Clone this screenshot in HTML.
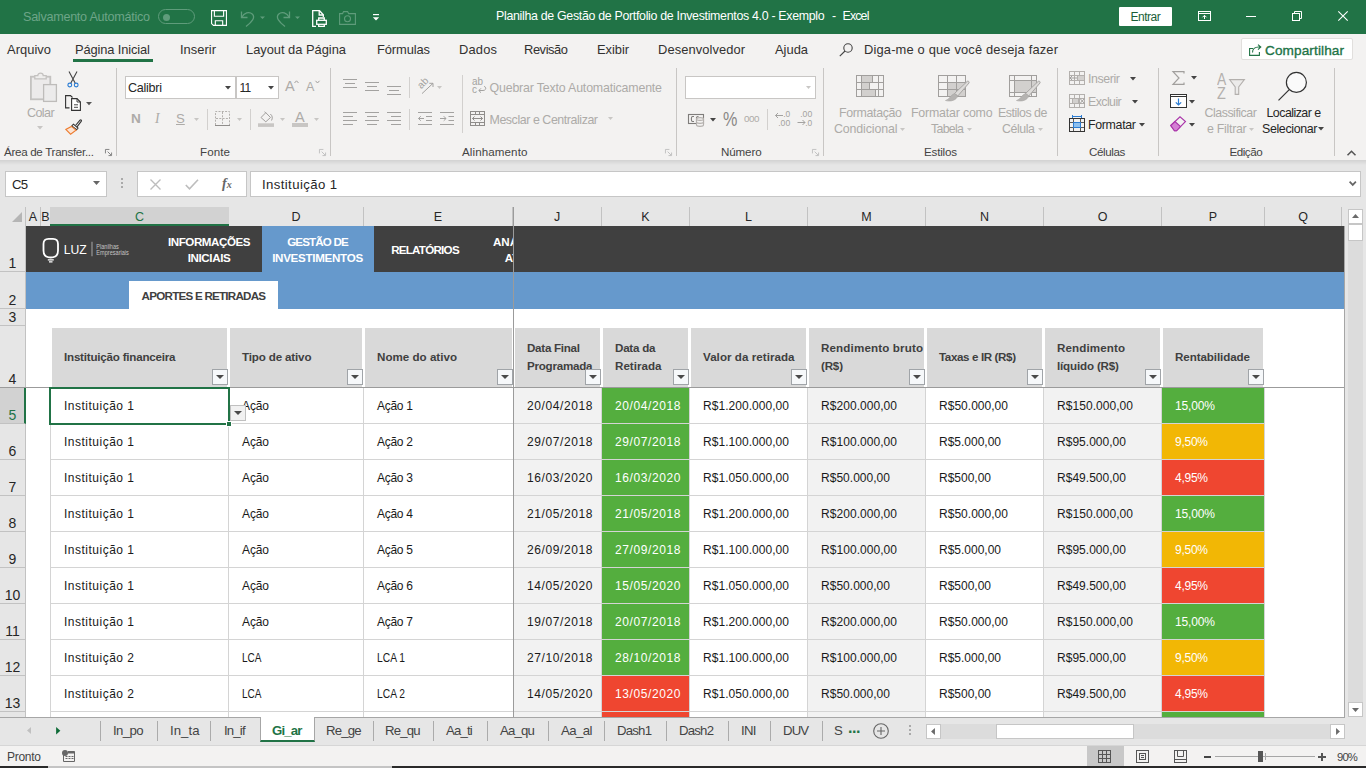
<!DOCTYPE html>
<html lang="pt-BR"><head><meta charset="utf-8"><title>Planilha de Gestão de Portfolio de Investimentos 4.0 - Exemplo - Excel</title>
<style>
html,body{margin:0;padding:0}
body{width:1366px;height:768px;overflow:hidden;position:relative;background:#e6e6e6;font-family:"Liberation Sans",sans-serif;color:#262626}
.a,.t{position:absolute}
.t{white-space:nowrap;line-height:1;margin:0}
svg{position:absolute;overflow:visible}
/* title bar */
#tb{left:0;top:0;width:1366px;height:34px;background:#217346}
#tb .t{color:#fff;font-size:12.4px}
/* ribbon tabs */
#rt{left:0;top:34px;width:1366px;height:31px;background:#f3f2f1}
#rt .t{font-size:12.900px;top:10px;color:#323130}
/* ribbon */
#rb{left:0;top:65px;width:1366px;height:95px;background:#f3f2f1}
#rb .t{font-size:12px;color:#adaba8}
#rb .lbl{font-size:11.6px;color:#444;top:81px}
#rb .sep{position:absolute;top:3px;width:1px;height:88px;background:#c8c6c4}
#rb .dk{color:#262626}
.shadow{left:0;top:160px;width:1366px;height:5px;background:linear-gradient(#d2d2d2,#e6e6e6)}
/* formula bar */
.fb{background:#fff;border:1px solid #c6c6c6;box-sizing:border-box}
/* grid */
#grid{left:0;top:207px;width:1344px;height:510px;overflow:hidden;background:#fff}
.ch{position:absolute;top:0;height:19px;background:#e6e6e6;font-size:12.5px;color:#262626;text-align:center;line-height:20px;box-sizing:border-box;border-right:1px solid #c2c2c2}
.rh{position:absolute;left:0;width:26px;background:#e6e6e6;box-sizing:border-box;border-bottom:1px solid #c2c2c2;border-right:1px solid #c2c2c2;font-size:14px;color:#262626;text-align:center}
.rh span{position:absolute;left:0;width:25px;bottom:1px;text-align:center;line-height:1}
.hc{position:absolute;top:121px;height:59px;background:#d9d9d9;font-weight:bold;font-size:11.6px;color:#404040;box-sizing:border-box;padding-left:12px;display:flex;align-items:center;line-height:18px;white-space:nowrap;padding-bottom:1px}
.fbt{position:absolute;top:162px;width:16px;height:16px;background:#f6f8fa;border:1px solid #a0a4a8;box-sizing:border-box}
.fbt:after{content:"";position:absolute;left:3px;top:5px;border:4px solid transparent;border-top:4px solid #4a4a4a;border-bottom:0}
.row{position:absolute;left:0;height:36px;width:1344px}
.c{position:absolute;top:0;height:36px;box-sizing:border-box;border-right:1px solid #d4d4d4;border-bottom:1px solid #d4d4d4;font-size:12px;line-height:37.5px;padding-left:13px;white-space:nowrap;color:#1a1a1a;overflow:hidden}
.g{background:#f2f2f2}
.gr{background:#54ae3e;color:#fff}
.ye{background:#f2b705;color:#fff}
.re{background:#ef4630;color:#fff}
.nv{color:#fff;font-weight:bold;font-size:11.600px;text-align:center}
.sbb{background:#fff;border:1px solid #c6c6c6;box-sizing:border-box}
/* sheet tabs */
#st{left:0;top:717px;width:1366px;height:28px;background:#e6e6e6}
#st .t{font-size:13.2px;top:7px;color:#444}
#st .sp{position:absolute;top:4px;width:1px;height:20px;background:#ababab}
/* status */
#sb{left:0;top:745px;width:1366px;height:21px;background:#f3f2f1;border-top:1px solid #d6d6d6;box-sizing:border-box}
#sb .t{font-size:12px;color:#444}
</style></head><body>
<div id="tb" class="a">
<span class="t" style="left:23px;top:11px;color:#6da588;font-size:12.6px;letter-spacing:-0.266px">Salvamento Automático</span>
<div class="a" style="left:158px;top:9px;width:37px;height:15px;border:1px solid #5f9c7b;border-radius:9px;box-sizing:border-box"></div>
<div class="a" style="left:163px;top:13.5px;width:7px;height:7px;border-radius:50%;background:#5f9c7b"></div>
<svg style="left:211px;top:10px" width="16" height="16" viewBox="0 0 17 17" fill="none" stroke="#fff" stroke-width="1.2"><path d="M0.6 0.6H16.4V16.4H2.6L0.6 14.4Z"/><path d="M3.6 0.6V6.6H13.4V0.6"/><path d="M4.6 16.4V11.4H12.4V16.4"/></svg>
<svg style="left:240px;top:10px" width="30" height="17" viewBox="0 0 30 17" fill="none" stroke="#5f9c7b" stroke-width="1.3"><path d="M1.5 1.5V7.5H7.5"/><path d="M1.8 7.2C4 3 9 1 12.5 4.2C15.5 7.5 12 12 6 16.5"/><path d="M20 6.5H25L22.5 9Z" fill="#5f9c7b" stroke="none"/></svg>
<svg style="left:275px;top:10px" width="30" height="17" viewBox="0 0 30 17" fill="none" stroke="#5f9c7b" stroke-width="1.3"><path d="M14.5 1.5V7.5H8.5"/><path d="M14.2 7.2C12 3 7 1 3.5 4.2C0.5 7.5 4 12 10 16.5"/><path d="M20 6.5H25L22.5 9Z" fill="#5f9c7b" stroke="none"/></svg>
<svg style="left:312px;top:10px" width="15" height="17" viewBox="0 0 15 17" fill="none" stroke="#fff" stroke-width="1.3"><path d="M4 16.3H0.7V0.7H7.5L11.3 4.7V7"/><path d="M7.2 0.7V5H11.3"/><rect x="4.7" y="10.3" width="9.6" height="4" /><path d="M6.7 10.3V8H12.3V10.3M6.7 14.3V16.3H12.3V14.3"/></svg>
<svg style="left:339px;top:11px" width="17" height="14" viewBox="0 0 17 14" fill="none" stroke="#5f9c7b" stroke-width="1.1"><path d="M0.6 2.6H3.6L4.6 0.6H8.6L9.6 2.6H16.4V13.4H0.6Z"/><circle cx="8.5" cy="7.8" r="3"/></svg>
<svg style="left:372px;top:14px" width="8" height="8" viewBox="0 0 8 8"><path d="M1 0.6H7" stroke="#fff" stroke-width="1.2"/><path d="M0.8 3.2H7.2L4 6.6Z" fill="#fff"/></svg>
<span class="t" style="left:496px;top:10px;letter-spacing:-0.314px">Planilha de Gestão de Portfolio de Investimentos 4.0 - Exemplo</span>
<span class="t" style="left:832px;top:10px">-</span>
<span class="t" style="left:842.5px;top:10px;letter-spacing:-0.850px">Excel</span>
<div class="a" style="left:1119px;top:7px;width:53px;height:19px;background:#fff;border-radius:1px"></div>
<span class="t" style="left:1130.500px;top:11px;color:#1b5e38;font-size:12px;letter-spacing:-0.498px">Entrar</span>
<svg style="left:1198px;top:11px" width="13" height="10" viewBox="0 0 13 10" fill="none" stroke="#fff" stroke-width="1"><rect x="0.500" y="0.500" width="12" height="9"/><path d="M0.500 2.500H12.500"/><path d="M6.500 8V4.500M4.500 6.300L6.500 4.300L8.500 6.300"/></svg>
<div class="a" style="left:1246px;top:16px;width:10px;height:1px;background:#fff"></div>
<svg style="left:1292px;top:11px" width="10" height="10" viewBox="0 0 10 10" fill="none" stroke="#fff" stroke-width="1"><rect x="0.500" y="2.500" width="7" height="7"/><path d="M2.500 2.500V0.500H9.500V7.500H7.500"/></svg>
<svg style="left:1338px;top:11px" width="10" height="10" viewBox="0 0 10 10" fill="none" stroke="#fff" stroke-width="1.100"><path d="M0.300 0.300L9.700 9.700M9.700 0.300L0.300 9.700"/></svg>
</div>

<div id="rt" class="a">
<span class="t" style="left:7px;letter-spacing:0.047px">Arquivo</span>
<span class="t" style="left:75px;letter-spacing:-0.130px">Página Inicial</span>
<div class="a" style="left:73px;top:25px;width:80px;height:3px;background:#217346"></div>
<span class="t" style="left:180px;letter-spacing:0.029px">Inserir</span>
<span class="t" style="left:246px;letter-spacing:-0.023px">Layout da Página</span>
<span class="t" style="left:377px;letter-spacing:-0.105px">Fórmulas</span>
<span class="t" style="left:459px;letter-spacing:0.184px">Dados</span>
<span class="t" style="left:524px;letter-spacing:-0.430px">Revisão</span>
<span class="t" style="left:597px;letter-spacing:-0.047px">Exibir</span>
<span class="t" style="left:658px;letter-spacing:0.083px">Desenvolvedor</span>
<span class="t" style="left:775px;letter-spacing:0.004px">Ajuda</span>
<svg style="left:838.500px;top:8.500px" width="14" height="14" viewBox="0 0 14 14" fill="none" stroke="#444" stroke-width="1.100"><circle cx="9" cy="5" r="4.200"/><path d="M6 8L0.800 13.200"/></svg>
<span class="t" style="left:864px;letter-spacing:0.161px">Diga-me o que você deseja fazer</span>
<div class="a" style="left:1241px;top:4px;width:112px;height:22px;background:#fff;border:1px solid #e1dfdd;box-sizing:border-box;border-radius:2px"></div>
<svg style="left:1249px;top:10px" width="13" height="12" viewBox="0 0 13 12" fill="none" stroke="#217346" stroke-width="1.1"><path d="M4 4.5H0.6V11.4H10.4V8"/><path d="M3.5 8.5C3.5 5 6 3 9.5 3H11.5M9 0.6L11.8 3L9 5.6"/></svg>
<span class="t" style="left:1265px;color:#217346;font-size:13.600px;-webkit-text-stroke:0.350px #217346;letter-spacing:0.108px">Compartilhar</span>
</div>

<div id="rb" class="a">
<!-- clipboard -->
<svg style="left:30px;top:7px" width="27" height="30" viewBox="0 0 27 30" fill="none" stroke="#c4c2c0" stroke-width="1.300"><rect x="0.900" y="4.700" width="19.400" height="22.600" fill="#eceaea" stroke-width="1.800"/><path d="M4.800 6.800V3.600H7.800C7.800 0.300 13.200 0.300 13.200 3.600H16.200V6.800Z" fill="#efeeed"/><rect x="13.600" y="12.600" width="12.800" height="16.800" fill="#ecebeb" stroke="#bebcba"/></svg>
<span class="t" style="left:27px;top:42px;font-size:12.6px;letter-spacing:-0.627px">Colar</span>
<svg style="left:37px;top:61px" width="6" height="4" viewBox="0 0 6 4"><path d="M0 0H6L3 3.5Z" fill="#c8c6c4"/></svg>
<svg style="left:67px;top:6px" width="12" height="17" viewBox="0 0 12 17" fill="none" stroke="#444" stroke-width="1.1"><path d="M2 0.5L8.4 12.4M10 0.5L3.6 12.4"/><circle cx="2.8" cy="14" r="1.9" stroke="#2b7cd3"/><circle cx="9.2" cy="14" r="1.9" stroke="#2b7cd3"/></svg>
<svg style="left:65px;top:30px" width="27" height="16" viewBox="0 0 27 16" fill="none" stroke="#333" stroke-width="1.100"><path d="M4.500 12.900H0.600V0.600H5.500L7.500 2.500"/><path d="M6.600 3.600H12L15.400 7V15.400H6.600Z" fill="#fff"/><path d="M12 3.600V7H15.400" stroke-width="0.900"/><path d="M9 9.800H13M9 12.300H13" stroke-width="0.900"/><path d="M21 7H27L24 10.300Z" fill="#555" stroke="none"/></svg>
<svg style="left:65px;top:54px" width="17" height="16" viewBox="0 0 17 16" fill="none" stroke="#333" stroke-width="1.1"><path d="M10.5 6.5L15 1.2C16 0.3 17 1.3 16.2 2.3L12 7.8"/><path d="M8.4 5.2L13 9L11.6 10.8L6.8 7Z" fill="#fff"/><path d="M6.4 7.4L11 11.2L5.6 15.2L0.8 10.4Z" stroke="#ed7d31" fill="#fbe5d6"/></svg>
<span class="t lbl" style="left:4px;letter-spacing:-0.299px">Área de Transfer...</span>
<svg class="dl" style="left:105px;top:84px" width="7" height="7" viewBox="0 0 8 8" fill="none" stroke="#777" stroke-width="1"><path d="M0.5 5V0.5H5"/><path d="M3 3L7 7M7.5 4V7.5H4"/></svg>
<div class="sep" style="left:116px"></div>
<!-- font -->
<div class="a fb" style="left:125px;top:11px;width:111px;height:23px;border-color:#c8c6c4"></div>
<div class="a fb" style="left:236px;top:11px;width:43px;height:23px;border-color:#c8c6c4"></div>
<span class="t dk" style="left:128px;top:17px;font-size:12.6px;letter-spacing:-0.284px">Calibri</span>
<span class="t dk" style="left:239.5px;top:17px;font-size:12px;letter-spacing:-0.700px">11</span>
<svg style="left:225px;top:21px" width="6" height="4" viewBox="0 0 6 4"><path d="M0 0H6L3 3.5Z" fill="#444"/></svg>
<svg style="left:268px;top:21px" width="6" height="4" viewBox="0 0 6 4"><path d="M0 0H6L3 3.5Z" fill="#444"/></svg>
<span class="t" style="left:285px;top:14px;font-size:14.5px">A</span><svg style="left:294px;top:15px" width="5" height="4" viewBox="0 0 5 4" fill="none" stroke="#a19f9d"><path d="M0.5 3L2.5 0.8L4.5 3"/></svg>
<span class="t" style="left:306px;top:16px;font-size:12.5px">A</span><svg style="left:315px;top:15px" width="5" height="4" viewBox="0 0 5 4" fill="none" stroke="#a19f9d"><path d="M0.5 0.8L2.5 3L4.5 0.8"/></svg>
<span class="t" style="left:131px;top:47px;font-size:13.6px;font-weight:bold">N</span>
<span class="t" style="left:155px;top:47px;font-size:13.6px;font-style:italic;font-family:'Liberation Serif',serif">I</span>
<span class="t" style="left:176px;top:47px;font-size:13.2px;text-decoration:underline">S</span>
<svg style="left:194px;top:53px" width="5" height="3" viewBox="0 0 5 3"><path d="M0 0H5L2.5 3Z" fill="#c8c6c4"/></svg>
<div class="a" style="left:207px;top:44px;width:1px;height:21px;background:#d2d0ce"></div>
<svg style="left:215px;top:46px" width="15" height="15" viewBox="0 0 15 15" fill="none" stroke="#b3b0ad" stroke-width="1"><path d="M0.500 14V0.500H14.500V14" stroke-dasharray="2 1.300"/><path d="M7.500 1V14M1 7.500H14" stroke-dasharray="2 1.300"/><path d="M0 14.500H15" stroke="#8f8d8b"/></svg>
<svg style="left:237px;top:53px" width="5" height="3" viewBox="0 0 5 3"><path d="M0 0H5L2.5 3Z" fill="#c8c6c4"/></svg>
<div class="a" style="left:250px;top:44px;width:1px;height:21px;background:#d2d0ce"></div>
<svg style="left:258px;top:46px" width="17" height="17" viewBox="0 0 17 17" fill="none" stroke="#a19f9d" stroke-width="1"><path d="M3 6.500L7.800 1.700L12.500 6.500L7.800 10.800Z"/><path d="M7.800 1.700L6.500 0.800"/><path d="M12.300 3C14.500 4.500 14.800 7.500 13.500 9.500"/><rect x="0" y="12.300" width="16" height="3.600" fill="#c8c6c4" stroke="none"/></svg>
<svg style="left:280px;top:53px" width="5" height="3" viewBox="0 0 5 3"><path d="M0 0H5L2.5 3Z" fill="#c8c6c4"/></svg>
<span class="t" style="left:295px;top:44.500px;font-size:14.500px">A</span>
<div class="a" style="left:292px;top:58.300px;width:16px;height:3.600px;background:#c8c6c4"></div>
<svg style="left:314px;top:53px" width="5" height="3" viewBox="0 0 5 3"><path d="M0 0H5L2.5 3Z" fill="#c8c6c4"/></svg>
<span class="t lbl" style="left:200px;letter-spacing:0.086px">Fonte</span>
<svg class="dl" style="left:319px;top:84px" width="7" height="7" viewBox="0 0 8 8" fill="none" stroke="#bbb" stroke-width="1"><path d="M0.5 5V0.5H5"/><path d="M3 3L7 7M7.5 4V7.5H4"/></svg>
<div class="sep" style="left:330px"></div>
<div class="a" style="left:343px;top:14px;width:14px;height:1px;background:#a3a2a0"></div><div class="a" style="left:345px;top:18px;width:10px;height:1px;background:#a3a2a0"></div><div class="a" style="left:343px;top:22px;width:14px;height:1px;background:#a3a2a0"></div>
<div class="a" style="left:365px;top:17px;width:14px;height:1px;background:#a3a2a0"></div><div class="a" style="left:367px;top:21px;width:10px;height:1px;background:#a3a2a0"></div><div class="a" style="left:365px;top:25px;width:14px;height:1px;background:#a3a2a0"></div>
<div class="a" style="left:387px;top:21px;width:14px;height:1px;background:#a3a2a0"></div><div class="a" style="left:389px;top:25px;width:10px;height:1px;background:#a3a2a0"></div><div class="a" style="left:387px;top:29px;width:14px;height:1px;background:#a3a2a0"></div>
<div class="a" style="left:409px;top:12px;width:1px;height:21px;background:#d2d0ce"></div>
<svg style="left:417px;top:13px" width="17" height="17" viewBox="0 0 17 17" fill="none" stroke="#a3a2a0" stroke-width="1"><path d="M5 15.600L16 5.300M12.300 5.300H16V9"/><text x="0" y="0" transform="translate(4.300,11.300) rotate(-45)" font-size="10" fill="#a3a2a0" stroke="none" font-family="Liberation Sans,sans-serif">ab</text></svg>
<svg style="left:437px;top:21px" width="5" height="3" viewBox="0 0 5 3"><path d="M0 0H5L2.5 3Z" fill="#c8c6c4"/></svg>
<div class="a" style="left:462px;top:10px;width:1px;height:58px;background:#d2d0ce"></div>
<svg style="left:472px;top:12px" width="15" height="18" viewBox="0 0 15 18" fill="none" stroke="#a3a2a0" stroke-width="1"><text x="0" y="7.500" font-size="10" fill="#a3a2a0" stroke="none" font-family="Liberation Sans,sans-serif" textLength="11" lengthAdjust="spacingAndGlyphs">ab</text><text x="0" y="16" font-size="10" fill="#a3a2a0" stroke="none" font-family="Liberation Sans,sans-serif">c</text><path d="M7 13.500H11C14.500 13.500 14.500 9.500 12 9.500M9 11.300L6.800 13.500L9 15.700"/></svg>
<span class="t" style="left:489.5px;top:17px;font-size:12.4px;letter-spacing:-0.177px">Quebrar Texto Automaticamente</span>
<div class="a" style="left:343px;top:47px;width:14px;height:1px;background:#a3a2a0"></div><div class="a" style="left:343px;top:51px;width:10px;height:1px;background:#a3a2a0"></div><div class="a" style="left:343px;top:55px;width:14px;height:1px;background:#a3a2a0"></div><div class="a" style="left:343px;top:59px;width:10px;height:1px;background:#a3a2a0"></div>
<div class="a" style="left:365px;top:47px;width:14px;height:1px;background:#a3a2a0"></div><div class="a" style="left:367px;top:51px;width:10px;height:1px;background:#a3a2a0"></div><div class="a" style="left:365px;top:55px;width:14px;height:1px;background:#a3a2a0"></div><div class="a" style="left:367px;top:59px;width:10px;height:1px;background:#a3a2a0"></div>
<div class="a" style="left:387px;top:47px;width:14px;height:1px;background:#a3a2a0"></div><div class="a" style="left:391px;top:51px;width:10px;height:1px;background:#a3a2a0"></div><div class="a" style="left:387px;top:55px;width:14px;height:1px;background:#a3a2a0"></div><div class="a" style="left:391px;top:59px;width:10px;height:1px;background:#a3a2a0"></div>
<div class="a" style="left:409px;top:44px;width:1px;height:21px;background:#d2d0ce"></div>
<svg style="left:418px;top:47px" width="14" height="13" viewBox="0 0 14 13" fill="none" stroke="#a3a2a0" stroke-width="1"><path d="M0 0.500H14M8 4.500H14M8 8.500H14M0 12.500H14M0.500 6.500H6M2.800 4.200L0.500 6.500L2.800 8.800"/></svg>
<svg style="left:440px;top:47px" width="14" height="13" viewBox="0 0 14 13" fill="none" stroke="#a3a2a0" stroke-width="1"><path d="M0 0.500H14M8.500 4.500H14M8.500 8.500H14M0 12.500H14M0 6.500H6M3.700 4.200L6 6.500L3.700 8.800"/></svg>
<svg style="left:470px;top:46px" width="15" height="15" viewBox="0 0 15 15" fill="none" stroke="#8f8d8b" stroke-width="1"><rect x="0.500" y="0.500" width="14" height="14"/><path d="M0.500 3.500H14.500M0.500 11.500H14.500M5.500 0.500V3.500M9.500 0.500V3.500M5.500 11.500V14.500M9.500 11.500V14.500M2.500 7.500H12.500M4.500 5.500L2.500 7.500L4.500 9.500M10.500 5.500L12.500 7.500L10.500 9.500"/></svg>
<span class="t" style="left:489.5px;top:49px;font-size:12.4px;letter-spacing:-0.428px">Mesclar e Centralizar</span>
<svg style="left:608px;top:52px" width="5" height="3" viewBox="0 0 5 3"><path d="M0 0H5L2.5 3Z" fill="#c8c6c4"/></svg>
<span class="t lbl" style="left:462px;letter-spacing:0.095px">Alinhamento</span>
<svg class="dl" style="left:665px;top:84px" width="7" height="7" viewBox="0 0 8 8" fill="none" stroke="#bbb" stroke-width="1"><path d="M0.5 5V0.5H5"/><path d="M3 3L7 7M7.5 4V7.5H4"/></svg>
<div class="sep" style="left:676px"></div>

<div class="a fb" style="left:685px;top:11px;width:131px;height:23px;border-color:#c8c6c4"></div>
<svg style="left:806px;top:21px" width="5" height="3" viewBox="0 0 5 3"><path d="M0 0H5L2.5 3Z" fill="#c8c6c4"/></svg>
<svg style="left:688px;top:49px" width="17" height="13" viewBox="0 0 17 13" fill="none" stroke="#7f7d7b" stroke-width="1.100"><rect x="0.500" y="0.500" width="15" height="9"/><path d="M6 2.500H4.500C3 2.500 3 7.500 4.500 7.500H6M8.500 7.500V3.500C8.500 2.500 10 2.500 10.500 3"/><g stroke="#b3b0ad" fill="#f3f2f1"><path d="M8.500 5V11C8.500 12.800 15.500 12.800 15.500 11V5"/><path d="M8.500 8C8.500 9.800 15.500 9.800 15.500 8"/><ellipse cx="12" cy="5" rx="3.500" ry="1.400"/></g></svg>
<svg style="left:710px;top:53px" width="6" height="4" viewBox="0 0 6 4"><path d="M0 0H6L3 3.5Z" fill="#444"/></svg>
<span class="t" style="left:722.500px;top:45px;font-size:19.500px;color:#8a8886;transform:scaleX(0.830);transform-origin:0 0">%</span>
<span class="t" style="left:744px;top:49px;font-size:9.800px;letter-spacing:-0.480px">000</span>
<div class="a" style="left:767px;top:44px;width:1px;height:21px;background:#d2d0ce"></div>
<svg style="left:775px;top:46px" width="16" height="16" viewBox="0 0 16 16" fill="none" stroke="#a3a2a0" stroke-width="1"><path d="M0.500 4.500H8M3 2L0.500 4.500L3 7"/><text x="15.200" y="6.300" font-size="8.400" fill="#a3a2a0" stroke="none" font-family="Liberation Sans,sans-serif" text-anchor="end">.0</text><text x="15.200" y="15" font-size="8.400" fill="#a3a2a0" stroke="none" font-family="Liberation Sans,sans-serif" text-anchor="end" textLength="12" lengthAdjust="spacingAndGlyphs">.00</text></svg>
<svg style="left:797px;top:46px" width="16" height="16" viewBox="0 0 16 16" fill="none" stroke="#a3a2a0" stroke-width="1"><text x="15.200" y="6.300" font-size="8.400" fill="#a3a2a0" stroke="none" font-family="Liberation Sans,sans-serif" text-anchor="end" textLength="12" lengthAdjust="spacingAndGlyphs">.00</text><path d="M0.500 11.500H8M5.500 9L8 11.500L5.500 14"/><text x="15.200" y="15" font-size="8.400" fill="#a3a2a0" stroke="none" font-family="Liberation Sans,sans-serif" text-anchor="end">.0</text></svg>
<span class="t lbl" style="left:721px;letter-spacing:-0.130px">Número</span>
<svg class="dl" style="left:812px;top:84px" width="7" height="7" viewBox="0 0 8 8" fill="none" stroke="#bbb" stroke-width="1"><path d="M0.5 5V0.5H5"/><path d="M3 3L7 7M7.5 4V7.5H4"/></svg>
<div class="sep" style="left:823px"></div>

<svg style="left:856px;top:10px" width="28" height="22" viewBox="0 0 28 22" fill="none" stroke="#a19f9d" stroke-width="1"><rect x="0.5" y="0.5" width="27" height="21" fill="#f3f2f1"/><rect x="5.500" y="0.500" width="11" height="7" fill="#d2d0ce"/><rect x="5.500" y="7.500" width="8" height="7" fill="#d2d0ce"/><rect x="5.500" y="14.500" width="14" height="7" fill="#d2d0ce"/><path d="M0.500 7.500H27.500M0.500 14.500H27.500M5.500 0.500V21.500M22.500 0.500V21.500"/></svg>
<span class="t" style="left:839px;top:42px;font-size:12.4px;letter-spacing:-0.347px">Formatação</span>
<span class="t" style="left:834px;top:58px;font-size:12.4px;letter-spacing:-0.135px">Condicional</span>
<svg style="left:900px;top:63px" width="5" height="3" viewBox="0 0 5 3"><path d="M0 0H5L2.5 3Z" fill="#c8c6c4"/></svg>
<svg style="left:938px;top:10px" width="31" height="27" viewBox="0 0 31 27" fill="none" stroke="#a19f9d" stroke-width="1"><rect x="0.5" y="0.5" width="27" height="21" fill="#f3f2f1"/><rect x="9.500" y="7.500" width="18" height="14" fill="#d2d0ce"/><path d="M0.500 7.500H27.500M0.500 14.500H27.500M9.500 0.500V21.500M18.500 0.500V21.500"/><path d="M29.300 6.300C30.500 5.800 31.500 6.800 31 8L19.800 21L16.500 18.500Z" fill="#dddbd9" stroke="#a8a6a4"/><path d="M16.500 18.500L19.800 21C18.500 25 13 27 7.500 25.500C11.500 24.500 12.500 20 16.500 18.500Z" fill="#b5b3b1" stroke="#a8a6a4" stroke-width="0.600"/></svg>
<span class="t" style="left:911px;top:42px;font-size:12.4px;letter-spacing:-0.200px">Formatar como</span>
<span class="t" style="left:931px;top:58px;font-size:12.4px;letter-spacing:-0.703px">Tabela</span>
<svg style="left:967px;top:63px" width="5" height="3" viewBox="0 0 5 3"><path d="M0 0H5L2.5 3Z" fill="#c8c6c4"/></svg>
<svg style="left:1009px;top:10px" width="31" height="27" viewBox="0 0 31 27" fill="none" stroke="#a19f9d" stroke-width="1"><rect x="0.5" y="0.5" width="27" height="21" fill="#f3f2f1"/><rect x="5.500" y="5.500" width="22" height="12" fill="#d2d0ce"/><path d="M0.500 5.500H27.500M0.500 17.500H27.500M5.500 0.500V21.500M22.500 0.500V21.500"/><path d="M29.300 6.300C30.500 5.800 31.500 6.800 31 8L19.800 21L16.500 18.500Z" fill="#dddbd9" stroke="#a8a6a4"/><path d="M16.500 18.500L19.800 21C18.500 25 13 27 7.500 25.500C11.500 24.500 12.500 20 16.500 18.500Z" fill="#b5b3b1" stroke="#a8a6a4" stroke-width="0.600"/></svg>
<span class="t" style="left:998px;top:42px;font-size:12.4px;letter-spacing:-0.482px">Estilos de</span>
<span class="t" style="left:1002px;top:58px;font-size:12.4px;letter-spacing:-0.428px">Célula</span>
<svg style="left:1038px;top:63px" width="5" height="3" viewBox="0 0 5 3"><path d="M0 0H5L2.5 3Z" fill="#c8c6c4"/></svg>
<span class="t lbl" style="left:924px;letter-spacing:-0.193px">Estilos</span>
<div class="sep" style="left:1057px"></div>

<svg style="left:1069px;top:6px" width="16" height="14" viewBox="0 0 16 14" fill="none" stroke="#b3b0ad" stroke-width="1"><rect x="0.500" y="0.500" width="15" height="13"/><path d="M0.500 4.500H15.500M0.500 9.500H15.500M5.500 0.500V13.500M10.500 0.500V13.500"/><rect x="8.500" y="4.500" width="7" height="5" fill="#d2d0ce"/><path d="M1 7H8M3.200 4.800L1 7L3.200 9.200" stroke="#a19f9d"/></svg>
<span class="t" style="left:1088px;top:8px;font-size:12.4px;letter-spacing:-0.406px">Inserir</span>
<svg style="left:1130px;top:12px" width="6" height="4" viewBox="0 0 6 4"><path d="M0 0H6L3 3.5Z" fill="#444"/></svg>
<svg style="left:1069px;top:29px" width="16" height="14" viewBox="0 0 16 14" fill="none" stroke="#b3b0ad" stroke-width="1"><rect x="0.500" y="0.500" width="15" height="13"/><path d="M0.500 4.500H15.500M0.500 9.500H15.500M5.500 0.500V13.500M10.500 0.500V13.500"/><rect x="3.500" y="4.500" width="6" height="5" fill="#d2d0ce"/><path d="M11 4.500L15.500 9.500M15.500 4.500L11 9.500" stroke="#a19f9d"/></svg>
<span class="t" style="left:1088px;top:31px;font-size:12.4px;letter-spacing:-0.581px">Excluir</span>
<svg style="left:1132px;top:35px" width="6" height="4" viewBox="0 0 6 4"><path d="M0 0H6L3 3.5Z" fill="#444"/></svg>
<svg style="left:1069px;top:50px" width="16" height="17" viewBox="0 0 16 17" fill="none" stroke="#333" stroke-width="1"><path d="M3.500 0V3M12.500 0V3M3.500 1.500H12.500" stroke="#2b7cd3"/><rect x="0.500" y="3.500" width="15" height="13"/><path d="M0.500 7.500H15.500M0.500 12.500H15.500M4.500 3.500V16.500M11.500 3.500V16.500" stroke-width="0.800"/><rect x="4.500" y="7.500" width="7" height="5" fill="#8ec0ee" stroke="#2b7cd3"/></svg>
<span class="t dk" style="left:1088px;top:54px;font-size:12.4px;letter-spacing:-0.324px">Formatar</span>
<svg style="left:1139px;top:58px" width="6" height="4" viewBox="0 0 6 4"><path d="M0 0H6L3 3.5Z" fill="#444"/></svg>
<span class="t lbl" style="left:1089px;letter-spacing:-0.395px">Células</span>
<div class="sep" style="left:1158px"></div>

<svg style="left:1172px;top:6px" width="13" height="14" viewBox="0 0 13 14" fill="none" stroke="#a19f9d" stroke-width="1.2"><path d="M12 2.500V0.600H1L7 7L1 13.400H12V11.500"/></svg>
<svg style="left:1191px;top:11px" width="6" height="4" viewBox="0 0 6 4"><path d="M0 0H6L3 3.5Z" fill="#444"/></svg>
<svg style="left:1170px;top:29px" width="17" height="14" viewBox="0 0 17 14" fill="none" stroke="#333" stroke-width="1"><rect x="0.5" y="0.5" width="16" height="13" fill="#fff"/><path d="M0.500 2.500H16.500"/><path d="M8.500 4.500V11M5.800 8.300L8.500 11L11.200 8.300" stroke="#2b7cd3" stroke-width="1.2"/></svg>
<svg style="left:1189px;top:35px" width="6" height="4" viewBox="0 0 6 4"><path d="M0 0H6L3 3.5Z" fill="#444"/></svg>
<svg style="left:1170px;top:51px" width="17" height="16" viewBox="0 0 17 16" fill="none" stroke="#a933a9" stroke-width="1.1"><path d="M0.800 9.500L10 0.800L15.500 5.500L6.500 14.800L4.500 14.800Z" fill="#f3f2f1"/><path d="M0.800 9.500L5 5.600L10.500 10.600L6.500 14.800L4.500 14.800Z" fill="#d47fd4"/></svg>
<svg style="left:1189px;top:58px" width="6" height="4" viewBox="0 0 6 4"><path d="M0 0H6L3 3.5Z" fill="#444"/></svg>
<span class="t" style="left:1217px;top:7.200px;font-size:16px;color:#b3b0ad;transform:scaleX(0.870);transform-origin:0 0">A</span>
<span class="t" style="left:1217px;top:21.200px;font-size:16px;color:#b3b0ad;transform:scaleX(0.900);transform-origin:0 0">Z</span>
<svg style="left:1229px;top:14px" width="16" height="16" viewBox="0 0 16 16" fill="#ecebea" stroke="#b3b0ad" stroke-width="1.100"><path d="M0.600 0.600H15.400L9.700 8V15.400H6.200V8Z"/></svg>
<span class="t" style="left:1204.500px;top:42px;font-size:12.4px;letter-spacing:-0.476px">Classificar</span>
<span class="t" style="left:1207px;top:58px;font-size:12.4px;letter-spacing:-0.287px">e Filtrar</span>
<svg style="left:1249px;top:63px" width="5" height="3" viewBox="0 0 5 3"><path d="M0 0H5L2.500 3Z" fill="#c8c6c4"/></svg>
<svg style="left:1278px;top:7px" width="30" height="29" viewBox="0 0 30 29" fill="none" stroke="#333" stroke-width="1.200"><circle cx="18.400" cy="10.400" r="10" fill="#fafafa"/><path d="M11 17.800L0.500 28.300"/></svg>
<span class="t dk" style="left:1266.500px;top:42px;font-size:12.4px;letter-spacing:-0.532px">Localizar e</span>
<span class="t dk" style="left:1262px;top:58px;font-size:12.4px;letter-spacing:-0.351px">Selecionar</span>
<svg style="left:1318px;top:62px" width="6" height="4" viewBox="0 0 6 4"><path d="M0 0H6L3 3.500Z" fill="#444"/></svg>
<span class="t lbl" style="left:1229.500px;letter-spacing:-0.471px">Edição</span>
<div class="sep" style="left:1334px"></div>
<svg style="left:1347px;top:84.500px" width="9" height="6" viewBox="0 0 9 6" fill="none" stroke="#555" stroke-width="1.500"><path d="M0.500 5.300L4.500 1.200L8.500 5.300"/></svg>

</div>
<div class="a shadow"></div>

<div class="a fb" style="left:5px;top:171px;width:102px;height:26px"></div>
<span class="t" style="left:12px;top:178px;font-size:13.200px;letter-spacing:-0.850px">C5</span>
<svg style="left:93px;top:181px" width="7" height="4" viewBox="0 0 7 4"><path d="M0 0H7L3.500 4Z" fill="#666"/></svg>
<div class="a" style="left:121px;top:178px;width:2px;height:2px;background:#aaa;box-shadow:0 4px #aaa,0 8px #aaa"></div>
<div class="a fb" style="left:137px;top:171px;width:110px;height:26px"></div>
<svg style="left:150px;top:179px" width="11" height="11" viewBox="0 0 11 11" fill="none" stroke="#bdbdbd" stroke-width="1.400"><path d="M0.500 0.500L10.500 10.500M10.500 0.500L0.500 10.500"/></svg>
<svg style="left:185px;top:179px" width="14" height="11" viewBox="0 0 14 11" fill="none" stroke="#bdbdbd" stroke-width="1.600"><path d="M0.800 6L4.500 9.800L13 0.800"/></svg>
<span class="t" style="left:222px;top:177px;font-size:14px;font-style:italic;font-weight:bold;font-family:'Liberation Serif',serif;color:#666">f<span style="font-size:10px">x</span></span>
<div class="a fb" style="left:250px;top:171px;width:1111px;height:26px"></div>
<span class="t" style="left:262px;top:178px;font-size:13.200px;letter-spacing:0.385px">Instituição 1</span>
<svg style="left:1349px;top:181px" width="7.500" height="5" viewBox="0 0 7.500 5" fill="none" stroke="#666" stroke-width="1.700"><path d="M0.600 0.600L3.750 3.900L6.900 0.600"/></svg>

<div id="grid" class="a">
<div class="ch" style="left:0;width:26px"></div>
<svg style="left:12px;top:5px" width="10" height="10" viewBox="0 0 12 12"><path d="M12 0V12H0Z" fill="#b5b5b5"/></svg>
<div class="ch" style="left:26px;width:15px">A</div>
<div class="ch" style="left:41px;width:10px">B</div>
<div class="ch" style="left:50px;width:179px;background:#d2d2d2;color:#217346;border-bottom:2px solid #217346;border-right:0">C</div>
<div class="ch" style="left:229px;width:135px">D</div>
<div class="ch" style="left:364px;width:149px">E</div>
<div class="ch" style="left:513px;width:89px">J</div>
<div class="ch" style="left:602px;width:88px">K</div>
<div class="ch" style="left:690px;width:118px">L</div>
<div class="ch" style="left:808px;width:118px">M</div>
<div class="ch" style="left:926px;width:118px">N</div>
<div class="ch" style="left:1044px;width:118px">O</div>
<div class="ch" style="left:1162px;width:103px">P</div>
<div class="ch" style="left:1265px;width:77px">Q</div>
<div class="ch" style="left:1342px;width:4px"></div>
<div class="rh" style="top:19px;height:46px"><span>1</span></div>
<div class="rh" style="top:65px;height:37px"><span>2</span></div>
<div class="rh" style="top:102px;height:17px"><span>3</span></div>
<div class="rh" style="top:119px;height:62px"><span>4</span></div>
<div class="rh" style="top:181px;height:36px;background:#d2d2d2;color:#217346;border-right:2px solid #217346"><span>5</span></div>
<div class="rh" style="top:217px;height:36px"><span>6</span></div>
<div class="rh" style="top:253px;height:36px"><span>7</span></div>
<div class="rh" style="top:289px;height:36px"><span>8</span></div>
<div class="rh" style="top:325px;height:36px"><span>9</span></div>
<div class="rh" style="top:361px;height:36px"><span>10</span></div>
<div class="rh" style="top:397px;height:36px"><span>11</span></div>
<div class="rh" style="top:433px;height:36px"><span>12</span></div>
<div class="rh" style="top:469px;height:36px"><span>13</span></div>
<div class="rh" style="top:505px;height:36px"><span>14</span></div>
<div class="a" style="left:26px;top:19px;width:1318px;height:46px;background:#404040"></div>
<div class="a" style="left:262px;top:19px;width:112px;height:46px;background:#6699cc"></div>
<div class="a" style="left:26px;top:65px;width:1318px;height:37px;background:#6699cc"></div>
<div class="a" style="left:129px;top:74px;width:149px;height:28px;background:#fff"></div>
<svg style="left:42px;top:29.500px" width="90" height="27" viewBox="0 0 90 27" fill="none" stroke="#fff"><path d="M1.500 7Q1.500 1.900 6.500 1.900H11Q16 1.900 16 7V13.500Q16 20.500 8.750 20.500Q1.500 20.500 1.500 13.500Z" stroke-width="1.800"/><path d="M5.800 22.900H11.800M7 24.800H10.500" stroke-width="1.300"/><path d="M50 4.700V19.200" stroke="#8a8a8a" stroke-width="1.400"/><text x="21.800" y="16.800" font-size="13.100" fill="#fff" stroke="none" font-family="Liberation Sans,sans-serif" textLength="23" lengthAdjust="spacingAndGlyphs">LUZ</text><text x="54.300" y="11.800" font-size="6.300" fill="#c4c4c4" stroke="none" font-family="Liberation Sans,sans-serif" textLength="22.500" lengthAdjust="spacingAndGlyphs">Planilhas</text><text x="54.300" y="17.900" font-size="6.300" fill="#c4c4c4" stroke="none" font-family="Liberation Sans,sans-serif" textLength="32.600" lengthAdjust="spacingAndGlyphs">Empresariais</text></svg>
<div class="t nv" style="left:155px;top:29px;width:108px"><span style="letter-spacing:-0.445px">INFORMAÇÕES</span></div>
<div class="t nv" style="left:155px;top:45px;width:108px"><span style="letter-spacing:-0.393px">INICIAIS</span></div>
<div class="t nv" style="left:262px;top:29px;width:111px"><span style="letter-spacing:-0.850px">GESTÃO DE</span></div>
<div class="t nv" style="left:262px;top:45px;width:111px"><span style="letter-spacing:-0.290px">INVESTIMENTOS</span></div>
<div class="t nv" style="left:373px;top:37px;width:104px"><span style="letter-spacing:-0.740px">RELATÓRIOS</span></div>
<div class="a" style="left:480px;top:19px;width:33px;height:46px;overflow:hidden"><div class="t nv" style="left:13px;top:10px;text-align:left">ANÁLISE DE</div><div class="t nv" style="left:24.700px;top:26px;text-align:left">ATIVOS</div></div>
<div class="t" style="left:129px;top:83px;width:149px;text-align:center;font-weight:bold;font-size:11.600px;color:#404040"><span style="letter-spacing:-0.742px">APORTES E RETIRADAS</span></div>
<div class="hc" style="left:52px;width:175px"><div><div><span style="letter-spacing:-0.213px">Instituição financeira</span></div></div></div>
<div class="fbt" style="left:212px"></div>
<div class="hc" style="left:230px;width:132px"><div><div><span style="letter-spacing:-0.150px">Tipo de ativo</span></div></div></div>
<div class="fbt" style="left:347px"></div>
<div class="hc" style="left:365px;width:147px"><div><div><span style="letter-spacing:0.009px">Nome do ativo</span></div></div></div>
<div class="fbt" style="left:497px"></div>
<div class="hc" style="left:515px;width:85px"><div><div><span style="letter-spacing:-0.267px">Data Final</span></div><div><span style="letter-spacing:-0.240px">Programada</span></div></div></div>
<div class="fbt" style="left:585px"></div>
<div class="hc" style="left:603px;width:85px"><div><div><span style="letter-spacing:-0.232px">Data da</span></div><div><span style="letter-spacing:0.013px">Retirada</span></div></div></div>
<div class="fbt" style="left:673px"></div>
<div class="hc" style="left:691px;width:115px"><div><div><span style="letter-spacing:0.040px">Valor da retirada</span></div></div></div>
<div class="fbt" style="left:791px"></div>
<div class="hc" style="left:809px;width:115px"><div><div><span style="letter-spacing:0.145px">Rendimento bruto</span></div><div><span style="letter-spacing:-0.182px">(R$)</span></div></div></div>
<div class="fbt" style="left:909px"></div>
<div class="hc" style="left:927px;width:115px"><div><div><span style="letter-spacing:-0.376px">Taxas e IR (R$)</span></div></div></div>
<div class="fbt" style="left:1027px"></div>
<div class="hc" style="left:1045px;width:115px"><div><div><span style="letter-spacing:0.111px">Rendimento</span></div><div><span style="letter-spacing:-0.161px">líquido (R$)</span></div></div></div>
<div class="fbt" style="left:1145px"></div>
<div class="hc" style="left:1163px;width:100px"><div><div><span style="letter-spacing:-0.086px">Rentabilidade</span></div></div></div>
<div class="fbt" style="left:1248px"></div>
<div class="row" style="top:181px">
<div class="c " style="border-left:1px solid #d4d4d4;left:50px;width:179px;padding-left:13px"><span style="letter-spacing:0.496px">Instituição 1</span></div>
<div class="c " style="left:229px;width:135px"><span style="letter-spacing:-0.120px">Ação</span></div>
<div class="c " style="left:364px;width:150px"><span style="letter-spacing:-0.272px">Ação 1</span></div>
<div class="c g" style="left:514px;width:88px"><span style="letter-spacing:0.604px">20/04/2018</span></div>
<div class="c gr" style="left:602px;width:88px"><span style="letter-spacing:0.604px">20/04/2018</span></div>
<div class="c " style="left:690px;width:118px"><span style="letter-spacing:0.046px">R$1.200.000,00</span></div>
<div class="c g" style="left:808px;width:118px"><span style="letter-spacing:0.054px">R$200.000,00</span></div>
<div class="c " style="left:926px;width:118px"><span style="letter-spacing:0.027px">R$50.000,00</span></div>
<div class="c g" style="left:1044px;width:118px"><span style="letter-spacing:0.054px">R$150.000,00</span></div>
<div class="c gr" style="left:1162px;width:103px"><span style="letter-spacing:-0.141px">15,00%</span></div>
</div>
<div class="row" style="top:217px">
<div class="c " style="border-left:1px solid #d4d4d4;left:50px;width:179px;padding-left:13px"><span style="letter-spacing:0.496px">Instituição 1</span></div>
<div class="c " style="left:229px;width:135px"><span style="letter-spacing:-0.120px">Ação</span></div>
<div class="c " style="left:364px;width:150px"><span style="letter-spacing:-0.272px">Ação 2</span></div>
<div class="c g" style="left:514px;width:88px"><span style="letter-spacing:0.604px">29/07/2018</span></div>
<div class="c gr" style="left:602px;width:88px"><span style="letter-spacing:0.604px">29/07/2018</span></div>
<div class="c " style="left:690px;width:118px"><span style="letter-spacing:0.046px">R$1.100.000,00</span></div>
<div class="c g" style="left:808px;width:118px"><span style="letter-spacing:0.054px">R$100.000,00</span></div>
<div class="c " style="left:926px;width:118px"><span style="letter-spacing:-0.007px">R$5.000,00</span></div>
<div class="c g" style="left:1044px;width:118px"><span style="letter-spacing:0.027px">R$95.000,00</span></div>
<div class="c ye" style="left:1162px;width:103px"><span style="letter-spacing:-0.258px">9,50%</span></div>
</div>
<div class="row" style="top:253px">
<div class="c " style="border-left:1px solid #d4d4d4;left:50px;width:179px;padding-left:13px"><span style="letter-spacing:0.496px">Instituição 1</span></div>
<div class="c " style="left:229px;width:135px"><span style="letter-spacing:-0.120px">Ação</span></div>
<div class="c " style="left:364px;width:150px"><span style="letter-spacing:-0.272px">Ação 3</span></div>
<div class="c g" style="left:514px;width:88px"><span style="letter-spacing:0.604px">16/03/2020</span></div>
<div class="c gr" style="left:602px;width:88px"><span style="letter-spacing:0.604px">16/03/2020</span></div>
<div class="c " style="left:690px;width:118px"><span style="letter-spacing:0.046px">R$1.050.000,00</span></div>
<div class="c g" style="left:808px;width:118px"><span style="letter-spacing:0.027px">R$50.000,00</span></div>
<div class="c " style="left:926px;width:118px"><span style="letter-spacing:-0.007px">R$500,00</span></div>
<div class="c g" style="left:1044px;width:118px"><span style="letter-spacing:0.027px">R$49.500,00</span></div>
<div class="c re" style="left:1162px;width:103px"><span style="letter-spacing:-0.258px">4,95%</span></div>
</div>
<div class="row" style="top:289px">
<div class="c " style="border-left:1px solid #d4d4d4;left:50px;width:179px;padding-left:13px"><span style="letter-spacing:0.496px">Instituição 1</span></div>
<div class="c " style="left:229px;width:135px"><span style="letter-spacing:-0.120px">Ação</span></div>
<div class="c " style="left:364px;width:150px"><span style="letter-spacing:-0.272px">Ação 4</span></div>
<div class="c g" style="left:514px;width:88px"><span style="letter-spacing:0.604px">21/05/2018</span></div>
<div class="c gr" style="left:602px;width:88px"><span style="letter-spacing:0.604px">21/05/2018</span></div>
<div class="c " style="left:690px;width:118px"><span style="letter-spacing:0.046px">R$1.200.000,00</span></div>
<div class="c g" style="left:808px;width:118px"><span style="letter-spacing:0.054px">R$200.000,00</span></div>
<div class="c " style="left:926px;width:118px"><span style="letter-spacing:0.027px">R$50.000,00</span></div>
<div class="c g" style="left:1044px;width:118px"><span style="letter-spacing:0.054px">R$150.000,00</span></div>
<div class="c gr" style="left:1162px;width:103px"><span style="letter-spacing:-0.141px">15,00%</span></div>
</div>
<div class="row" style="top:325px">
<div class="c " style="border-left:1px solid #d4d4d4;left:50px;width:179px;padding-left:13px"><span style="letter-spacing:0.496px">Instituição 1</span></div>
<div class="c " style="left:229px;width:135px"><span style="letter-spacing:-0.120px">Ação</span></div>
<div class="c " style="left:364px;width:150px"><span style="letter-spacing:-0.272px">Ação 5</span></div>
<div class="c g" style="left:514px;width:88px"><span style="letter-spacing:0.604px">26/09/2018</span></div>
<div class="c gr" style="left:602px;width:88px"><span style="letter-spacing:0.604px">27/09/2018</span></div>
<div class="c " style="left:690px;width:118px"><span style="letter-spacing:0.046px">R$1.100.000,00</span></div>
<div class="c g" style="left:808px;width:118px"><span style="letter-spacing:0.054px">R$100.000,00</span></div>
<div class="c " style="left:926px;width:118px"><span style="letter-spacing:-0.007px">R$5.000,00</span></div>
<div class="c g" style="left:1044px;width:118px"><span style="letter-spacing:0.027px">R$95.000,00</span></div>
<div class="c ye" style="left:1162px;width:103px"><span style="letter-spacing:-0.258px">9,50%</span></div>
</div>
<div class="row" style="top:361px">
<div class="c " style="border-left:1px solid #d4d4d4;left:50px;width:179px;padding-left:13px"><span style="letter-spacing:0.496px">Instituição 1</span></div>
<div class="c " style="left:229px;width:135px"><span style="letter-spacing:-0.120px">Ação</span></div>
<div class="c " style="left:364px;width:150px"><span style="letter-spacing:-0.272px">Ação 6</span></div>
<div class="c g" style="left:514px;width:88px"><span style="letter-spacing:0.604px">14/05/2020</span></div>
<div class="c gr" style="left:602px;width:88px"><span style="letter-spacing:0.604px">15/05/2020</span></div>
<div class="c " style="left:690px;width:118px"><span style="letter-spacing:0.046px">R$1.050.000,00</span></div>
<div class="c g" style="left:808px;width:118px"><span style="letter-spacing:0.027px">R$50.000,00</span></div>
<div class="c " style="left:926px;width:118px"><span style="letter-spacing:-0.007px">R$500,00</span></div>
<div class="c g" style="left:1044px;width:118px"><span style="letter-spacing:0.027px">R$49.500,00</span></div>
<div class="c re" style="left:1162px;width:103px"><span style="letter-spacing:-0.258px">4,95%</span></div>
</div>
<div class="row" style="top:397px">
<div class="c " style="border-left:1px solid #d4d4d4;left:50px;width:179px;padding-left:13px"><span style="letter-spacing:0.496px">Instituição 1</span></div>
<div class="c " style="left:229px;width:135px"><span style="letter-spacing:-0.120px">Ação</span></div>
<div class="c " style="left:364px;width:150px"><span style="letter-spacing:-0.272px">Ação 7</span></div>
<div class="c g" style="left:514px;width:88px"><span style="letter-spacing:0.604px">19/07/2018</span></div>
<div class="c gr" style="left:602px;width:88px"><span style="letter-spacing:0.604px">20/07/2018</span></div>
<div class="c " style="left:690px;width:118px"><span style="letter-spacing:0.046px">R$1.200.000,00</span></div>
<div class="c g" style="left:808px;width:118px"><span style="letter-spacing:0.054px">R$200.000,00</span></div>
<div class="c " style="left:926px;width:118px"><span style="letter-spacing:0.027px">R$50.000,00</span></div>
<div class="c g" style="left:1044px;width:118px"><span style="letter-spacing:0.054px">R$150.000,00</span></div>
<div class="c gr" style="left:1162px;width:103px"><span style="letter-spacing:-0.141px">15,00%</span></div>
</div>
<div class="row" style="top:433px">
<div class="c " style="border-left:1px solid #d4d4d4;left:50px;width:179px;padding-left:13px"><span style="letter-spacing:0.496px">Instituição 2</span></div>
<div class="c " style="left:229px;width:135px"><span style="display:inline-block;transform:scaleX(0.835);transform-origin:0 50%">LCA</span></div>
<div class="c " style="left:364px;width:150px"><span style="display:inline-block;transform:scaleX(0.856);transform-origin:0 50%">LCA 1</span></div>
<div class="c g" style="left:514px;width:88px"><span style="letter-spacing:0.604px">27/10/2018</span></div>
<div class="c gr" style="left:602px;width:88px"><span style="letter-spacing:0.604px">28/10/2018</span></div>
<div class="c " style="left:690px;width:118px"><span style="letter-spacing:0.046px">R$1.100.000,00</span></div>
<div class="c g" style="left:808px;width:118px"><span style="letter-spacing:0.054px">R$100.000,00</span></div>
<div class="c " style="left:926px;width:118px"><span style="letter-spacing:-0.007px">R$5.000,00</span></div>
<div class="c g" style="left:1044px;width:118px"><span style="letter-spacing:0.027px">R$95.000,00</span></div>
<div class="c ye" style="left:1162px;width:103px"><span style="letter-spacing:-0.258px">9,50%</span></div>
</div>
<div class="row" style="top:469px">
<div class="c " style="border-left:1px solid #d4d4d4;left:50px;width:179px;padding-left:13px"><span style="letter-spacing:0.496px">Instituição 2</span></div>
<div class="c " style="left:229px;width:135px"><span style="display:inline-block;transform:scaleX(0.835);transform-origin:0 50%">LCA</span></div>
<div class="c " style="left:364px;width:150px"><span style="display:inline-block;transform:scaleX(0.856);transform-origin:0 50%">LCA 2</span></div>
<div class="c g" style="left:514px;width:88px"><span style="letter-spacing:0.604px">14/05/2020</span></div>
<div class="c re" style="left:602px;width:88px"><span style="letter-spacing:0.604px">13/05/2020</span></div>
<div class="c " style="left:690px;width:118px"><span style="letter-spacing:0.046px">R$1.050.000,00</span></div>
<div class="c g" style="left:808px;width:118px"><span style="letter-spacing:0.027px">R$50.000,00</span></div>
<div class="c " style="left:926px;width:118px"><span style="letter-spacing:-0.007px">R$500,00</span></div>
<div class="c g" style="left:1044px;width:118px"><span style="letter-spacing:0.027px">R$49.500,00</span></div>
<div class="c re" style="left:1162px;width:103px"><span style="letter-spacing:-0.258px">4,95%</span></div>
</div>
<div class="row" style="top:505px">
<div class="c " style="border-left:1px solid #d4d4d4;left:50px;width:179px;padding-left:13px"><span style="letter-spacing:0.496px">Instituição 2</span></div>
<div class="c " style="left:229px;width:135px"><span style="display:inline-block;transform:scaleX(0.835);transform-origin:0 50%">LCA</span></div>
<div class="c " style="left:364px;width:150px"><span style="display:inline-block;transform:scaleX(0.856);transform-origin:0 50%">LCA 3</span></div>
<div class="c g" style="left:514px;width:88px"><span style="letter-spacing:0.604px">15/08/2018</span></div>
<div class="c re" style="left:602px;width:88px"><span style="letter-spacing:0.604px">14/08/2018</span></div>
<div class="c " style="left:690px;width:118px"><span style="letter-spacing:0.046px">R$1.200.000,00</span></div>
<div class="c g" style="left:808px;width:118px"><span style="letter-spacing:0.054px">R$200.000,00</span></div>
<div class="c " style="left:926px;width:118px"><span style="letter-spacing:0.027px">R$50.000,00</span></div>
<div class="c g" style="left:1044px;width:118px"><span style="letter-spacing:0.054px">R$150.000,00</span></div>
<div class="c gr" style="left:1162px;width:103px"><span style="letter-spacing:-0.141px">15,00%</span></div>
</div>
<div class="a" style="left:513px;top:0;width:1px;height:510px;background:#9b9b9b"></div>
<div class="a" style="left:0;top:180px;width:1344px;height:1px;background:#9b9b9b"></div>
<div class="a" style="left:49px;top:180px;width:181px;height:38px;border:2px solid #217346;box-sizing:border-box"></div>
<div class="a" style="left:226px;top:214px;width:6px;height:6px;background:#217346;border:1px solid #fff;box-sizing:border-box"></div>
<div class="fbt" style="left:230px;top:198px;border-color:#c0c0c0;background:#f1f1f1"></div>
</div>
<div class="a" style="left:1344px;top:207px;width:22px;height:510px;background:#e6e6e6"></div>
<div class="a" style="left:1348px;top:241px;width:15px;height:461px;background:#dcdcdc"></div>
<div class="a" style="left:1344px;top:226px;width:1px;height:491px;background:#a6a6a6"></div>
<div class="a" style="left:0;top:717px;width:1345px;height:1px;background:#a6a6a6"></div>
<div class="a sbb" style="left:1348px;top:209px;width:15px;height:15px"></div><svg style="left:1352px;top:214px" width="7" height="4" viewBox="0 0 9 5"><path d="M0 5H9L4.500 0Z" fill="#6a6a6a"/></svg>
<div class="a sbb" style="left:1348px;top:224px;width:15px;height:17px"></div>
<div class="a sbb" style="left:1348px;top:702px;width:15px;height:15px"></div><svg style="left:1352px;top:708px" width="7" height="4" viewBox="0 0 9 5"><path d="M0 0H9L4.500 5Z" fill="#6a6a6a"/></svg>

<div id="st" class="a">
<svg style="left:27px;top:10px" width="4" height="7" viewBox="0 0 4 7"><path d="M4 0V7L0 3.500Z" fill="#c0c0c0"/></svg>
<svg style="left:56px;top:9.700px" width="4.500" height="7.600" viewBox="0 0 5 9"><path d="M0 0V9L5 4.500Z" fill="#0e6b37"/></svg>
<div class="sp" style="left:100px"></div>
<span class="t" style="left:113px;letter-spacing:-0.629px">In_po</span>
<div class="sp" style="left:157px"></div>
<span class="t" style="left:170px;letter-spacing:0.039px">In_ta</span>
<div class="sp" style="left:210px"></div>
<span class="t" style="left:224px;letter-spacing:-0.834px">In_if</span>
<div class="a" style="left:0;top:0;width:1345px;height:1px;background:#a6a6a6"></div>
<div class="a" style="left:260px;top:0;width:53px;height:23px;background:#fff;border-left:1px solid #a6a6a6;border-right:1px solid #a6a6a6;border-bottom:2px solid #217346"></div>
<span class="t" style="left:272px;color:#217346;font-weight:bold;letter-spacing:-0.850px">Gi_ar</span>
<span class="t" style="left:326px;letter-spacing:-0.850px">Re_ge</span>
<div class="sp" style="left:373px"></div>
<span class="t" style="left:385px;letter-spacing:-0.850px">Re_qu</span>
<div class="sp" style="left:433px"></div>
<span class="t" style="left:446px;letter-spacing:-0.850px">Aa_ti</span>
<div class="sp" style="left:487px"></div>
<span class="t" style="left:500px;letter-spacing:-0.850px">Aa_qu</span>
<div class="sp" style="left:548px"></div>
<span class="t" style="left:561px;letter-spacing:-0.559px">Aa_al</span>
<div class="sp" style="left:604px"></div>
<span class="t" style="left:617px;letter-spacing:-0.781px">Dash1</span>
<div class="sp" style="left:666px"></div>
<span class="t" style="left:679px;letter-spacing:-0.781px">Dash2</span>
<div class="sp" style="left:728px"></div>
<span class="t" style="left:741px;letter-spacing:-0.680px">INI</span>
<div class="sp" style="left:770px"></div>
<span class="t" style="left:783px;letter-spacing:-0.850px">DUV</span>
<div class="sp" style="left:822px"></div>
<span class="t" style="left:834px">S</span>
<span class="t" style="left:848px;color:#217346;font-weight:bold;top:3px;font-size:16px;letter-spacing:-0.5px">...</span>
<svg style="left:873px;top:6px" width="16" height="16" viewBox="0 0 16 16" fill="none" stroke="#666" stroke-width="1.100"><circle cx="8" cy="8" r="7.300"/><path d="M8 4V12M4 8H12"/></svg>
<div class="a" style="left:909px;top:8px;width:2px;height:2px;background:#aaa;box-shadow:0 4px #aaa,0 8px #aaa"></div>
<div class="a" style="left:941px;top:7px;width:389px;height:15px;background:#dcdcdc"></div>
<div class="a sbb" style="left:926px;top:7px;width:15px;height:15px"></div><svg style="left:931px;top:11px" width="4" height="7" viewBox="0 0 5 9"><path d="M5 0V9L0 4.500Z" fill="#6a6a6a"/></svg>
<div class="a" style="left:996px;top:7px;width:138px;height:15px;background:#fff;border:1px solid #c6c6c6;box-sizing:border-box"></div>
<div class="a sbb" style="left:1330px;top:7px;width:15px;height:15px"></div><svg style="left:1336px;top:11px" width="4" height="7" viewBox="0 0 5 9"><path d="M0 0V9L5 4.500Z" fill="#6a6a6a"/></svg>
</div>

<div id="sb" class="a">
<span class="t" style="left:7px;top:5px;letter-spacing:-0.272px">Pronto</span>
<svg style="left:62px;top:4px" width="14" height="13" viewBox="0 0 14 13" fill="none" stroke="#666" stroke-width="1"><path d="M1.500 5V11.500H12.500V1.500H6"/><path d="M6 2.500H12.500" stroke-width="2"/><circle cx="3" cy="3" r="3" fill="#666" stroke="none"/><path d="M3.500 6.500H5.500M6.500 6.500H8.500M9.500 6.500H11.500M3.500 8.500H5.500M6.500 8.500H8.500M9.500 8.500H11.500" stroke-width="1" stroke-dasharray="2 1"/></svg>
<div class="a" style="left:1087px;top:0;width:37px;height:20px;background:#c8c8c8"></div>
<svg style="left:1098px;top:4px" width="13" height="13" viewBox="0 0 13 13" fill="none" stroke="#555" stroke-width="1"><rect x="0.500" y="0.500" width="12" height="12"/><path d="M0.500 4.500H12.500M0.500 8.500H12.500M4.500 0.500V12.500M8.500 0.500V12.500"/></svg>
<svg style="left:1136px;top:4px" width="13" height="13" viewBox="0 0 13 13" fill="none" stroke="#555" stroke-width="1"><rect x="0.500" y="0.500" width="12" height="12"/><rect x="3.500" y="3.500" width="6" height="6"/><path d="M5 5.500H8M5 7.500H8"/></svg>
<svg style="left:1174px;top:4px" width="13" height="13" viewBox="0 0 13 13" fill="none" stroke="#555" stroke-width="1"><rect x="0.500" y="0.500" width="12" height="12"/><path d="M3.500 0.500V6.500H9.500V0.500M0.500 9.500H12.500"/></svg>
<div class="a" style="left:1204px;top:10px;width:7px;height:2px;background:#444"></div>
<div class="a" style="left:1215px;top:10px;width:100px;height:1px;background:#a6a6a6"></div>
<div class="a" style="left:1265px;top:7px;width:1px;height:7px;background:#a6a6a6"></div>
<div class="a" style="left:1258px;top:5px;width:5px;height:11px;background:#555"></div>
<div class="a" style="left:1318px;top:10px;width:8px;height:2px;background:#555"></div><div class="a" style="left:1321px;top:7px;width:2px;height:8px;background:#555"></div>
<span class="t" style="left:1337px;top:5.500px;font-size:11.300px;letter-spacing:-0.850px">90%</span>
</div>
<div class="a" style="left:0;top:766px;width:1366px;height:2px;background:#2a2a2a"></div><div class="a" style="left:48px;top:766px;width:344px;height:2px;background:#c4c4c4"></div>

</body></html>
